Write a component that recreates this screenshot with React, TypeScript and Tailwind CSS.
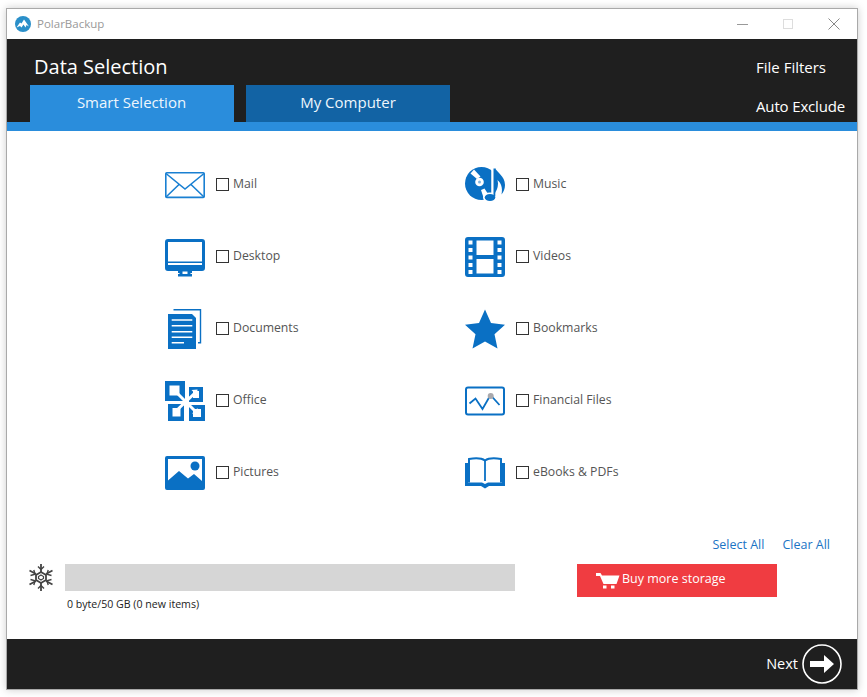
import React from "react";

const C = "#0a70c4";

const Mail = () => (
  <svg width="40" height="40" viewBox="0 0 40 40" fill="none" stroke="#1a80d2" strokeWidth="1.600">
    <rect x="0.800" y="7.800" width="38.400" height="24.600" rx="1" />
    <path d="M1 8.500 L20 24 L39 8.500 M1 32 L14 19.500 M39 32 L26 19.500" />
  </svg>
);
const Desktop = () => (
  <svg width="40" height="40" viewBox="0 0 40 40" fill={C}>
    <path fillRule="evenodd" d="M3 2h34a3 3 0 0 1 3 3v26a3 3 0 0 1-3 3H3a3 3 0 0 1-3-3V5a3 3 0 0 1 3-3zM3 5v19.500h34V5zM3 26v2h34v-2z" />
    <path fillRule="evenodd" d="M13 34h14v2h-1.500v1H27v2.500H13V37h1.500v-1H13zM17.500 34.500h5V37h-5z" />
  </svg>
);
const Documents = () => (
  <svg width="40" height="40" viewBox="0 0 40 40" fill="none">
    <path d="M8.500 .7h27v33h-2.500" stroke={C} strokeWidth="1.400" />
    <path d="M3 5h24l4 4v31H3z" fill={C} />
    <path d="M6.700 11h20.600M6.700 16.700h20.600M6.700 22.700h20.600M6.700 28.300h20.600M6.700 33.700h12.300" stroke="#fff" strokeWidth="1.400" />
  </svg>
);
const Office = () => (
  <svg width="40" height="40" viewBox="0 0 40 40">
    <path fill={C} fillRule="evenodd" d="M0 0h20v20H0zM4.500 4.500v10h10v-10z" />
    <path fill={C} fillRule="evenodd" d="M24 6h14v15H24zM28 10v7h6v-7z" />
    <path fill={C} fillRule="evenodd" d="M3 23h16v17H3zM7.500 27v8.500h8V27z" />
    <path fill={C} fillRule="evenodd" d="M24 24h16v16H24zM28 28v8h8v-8z" />
    <path d="M10 10l21 21M31 11L11 30" stroke="#fff" strokeWidth="3" fill="none" />
    <path d="M19 19h5v5h-5z" fill="#fff" />
    <path d="M32.500 8.500l-.5 6-5.500-5.500zM33 33l-6-.5 5.500-5.500z" fill="#fff" />
  </svg>
);
const Pictures = () => (
  <svg width="40" height="40" viewBox="0 0 40 40" fill={C}>
    <path fillRule="evenodd" d="M2 3h36a2 2 0 0 1 2 2v30a2 2 0 0 1-2 2H2a2 2 0 0 1-2-2V5a2 2 0 0 1 2-2zM3 6v21.500L14 18l9 7.500 6-4.500 8 7V6z" />
    <circle cx="30" cy="13" r="4.500" />
  </svg>
);
const Music = () => (
  <svg width="40" height="40" viewBox="0 0 40 40" fill={C}>
    <circle cx="16.500" cy="18.500" r="16.500" />
    <path d="M9 4.500l6.500 7-3.500 2.500-6.500-5.500zM16 25l3.500-1.500 4.500 7-5 3.500z" fill="#fff" />
    <circle cx="14.500" cy="17" r="4.300" fill="#fff" />
    <circle cx="14.500" cy="17" r="1.500" fill={C} opacity="0.5" />
    <path d="M28 1v29" stroke="#fff" strokeWidth="3.500" fill="none" />
    <ellipse cx="25" cy="32.500" rx="7" ry="5" fill="#fff" />
    <ellipse cx="25" cy="32.500" rx="5.300" ry="3.500" fill={C} />
    <path d="M28.500 3.500h1.800v28h-1.800z" />
    <path d="M30 3c1.500 4 10 8 10 17 0 4-1.500 7-3.500 9.500 1.500-7-.5-13-6.500-16z" />
  </svg>
);
const Videos = () => (
  <svg width="40" height="40" viewBox="0 0 40 40" fill={C}>
    <path fillRule="evenodd" d="M3 0h34a3 3 0 0 1 3 3v34a3 3 0 0 1-3 3H3a3 3 0 0 1-3-3V3a3 3 0 0 1 3-3zM3.500 3.500v4h4v-4zM3.500 11v4h4v-4zM3.500 18.500v4h4v-4zM3.500 26v4h4v-4zM3.500 33v4h4v-4zM32.500 3.500v4h4v-4zM32.500 11v4h4v-4zM32.500 18.500v4h4v-4zM32.500 26v4h4v-4zM32.500 33v4h4v-4zM11.500 3.500V18h17V3.500zM11.500 22v14.500h17V22z" />
  </svg>
);
const Star = () => (
  <svg width="40" height="40" viewBox="0 0 40 40" fill={C}>
    <path d="M20 0.500l6 13.500 14 1.800-10.500 9.500 3 14.200L20 32.500 7.500 39.500l3-14.200L0 15.800 14 14z" />
  </svg>
);
const Financial = () => (
  <svg width="40" height="40" viewBox="0 0 40 40" fill="none">
    <rect x="1" y="6.500" width="38" height="27" rx="2" stroke={C} strokeWidth="2" />
    <path d="M4.500 22.500l6-5 7 10.500 8-14 9 10" stroke={C} strokeWidth="1.800" />
    <circle cx="25.700" cy="15" r="3" fill="#a9a9ad" />
  </svg>
);
const Book = () => (
  <svg width="40" height="40" viewBox="0 0 40 40" fill="none">
    <path d="M4 29.500V6c5.500-1 12.500-1 16 1.500C23.500 5 30.500 5 36 6v23.500" stroke={C} strokeWidth="2" />
    <path d="M20 8v20" stroke={C} strokeWidth="1.800" />
    <path d="M0 10h3v19.500h14l3 1.500 3-1.500h14V10h3v23H24l-4 2.500-4-2.500H0z" fill={C} />
  </svg>
);
const Flake = () => (
  <svg width="26" height="27" viewBox="0 0 26 27" fill="none" stroke="#444" strokeWidth="1.400">
    <path d="M13 0v8M13 19v8M1.500 6.500 8 10M18 17l6.500 3.500M24.500 6.500 18 10M8 17l-6.500 3.500" strokeWidth="1.800" />
    <path d="M10 2.500l3 3 3-3M10 24.500l3-3 3 3M2.500 11.500l4.500-1.200-1.200-4.300M23.500 11.500 19 10.300l1.200-4.300M2.500 15.500l4.500 1.200-1.200 4.300M23.500 15.500 19 16.700l1.200 4.300" />
    <path d="M13 8l5 3v5l-5 3-5-3v-5z" strokeWidth="1.800" />
    <path d="M13 11l2.500 1.500v2L13 16l-2.500-1.500v-2z" strokeWidth="1.200" />
  </svg>
);
const Cart = () => (
  <svg width="24" height="16" viewBox="0 0 24 16" fill="#fff">
    <path d="M0 0h4.500l1.500 2.500h17.500L20.500 11H7.500L4 3H0z" />
    <rect x="7" y="12.500" width="3.500" height="3" />
    <rect x="15" y="12.500" width="3.500" height="3" />
  </svg>
);
const Logo = () => (
  <svg width="16" height="16" viewBox="0 0 16 16">
    <circle cx="8" cy="8" r="8" fill="#2a8fc9" />
    <path d="M1.500 11.500 5 6.500l1.500 1L9 3.500 14 10.500l-2.500-1.500-1 2.500-2-3-2 3-1.500-1.500z" fill="#fff" />
  </svg>
);

const items: [React.FC, string, React.FC, string][] = [
  [Mail, "Mail", Music, "Music"],
  [Desktop, "Desktop", Videos, "Videos"],
  [Documents, "Documents", Star, "Bookmarks"],
  [Office, "Office", Financial, "Financial Files"],
  [Pictures, "Pictures", Book, "eBooks & PDFs"],
];

const Item = ({ Icon, label }: { Icon: React.FC; label: string }) => (
  <div className="flex items-center h-10 w-[300px]">
    <Icon />
    <span className="ml-[11px] mt-[-2px] w-[13px] h-[13px] border border-[#333] bg-white shrink-0" />
    <span className="ml-1 mt-[-1px] text-[12.250px] leading-none text-[#555]">{label}</span>
  </div>
);

export default function App() {
  return (
    <div className="w-[867px] h-[697px] bg-white pt-2 pl-[6px] overflow-hidden font-['Open_Sans','Noto_Sans',sans-serif]">
      <div className="w-[852px] h-[682px] border border-[#a9a9a9] shadow-[0_0_8px_rgba(0,0,0,0.2)] flex flex-col bg-white">
        <div className="h-[30px] flex items-center shrink-0 pl-2">
          <Logo />
          <span className="ml-[6px] text-[11.500px] text-[#999]">PolarBackup</span>
          <div className="ml-auto flex items-center">
            <span className="w-[11px] h-px bg-[#999] mr-[35px]" />
            <span className="w-[10px] h-[10px] border border-[#ddd] mr-[35px]" />
            <svg className="mr-[17px]" width="12" height="12" viewBox="0 0 12 12" stroke="#888" fill="none"><path d="M.5.500l11 11M11.500.500l-11 11" /></svg>
          </div>
        </div>

        <div className="h-[83px] bg-[#1f1f1f] shrink-0 flex justify-between text-white">
          <div className="flex flex-col pl-[23px]">
            <div className="pl-[4px] h-[46px] pt-[14px] text-[20px] leading-[28px]">Data Selection</div>
            <div className="flex gap-3 h-[37px]">
              <div className="w-[204px] bg-[#2a8ddc] flex items-center justify-center pb-[2px] pr-px text-[15px] text-[#eef6fc]">Smart Selection</div>
              <div className="w-[204px] bg-[#1263a4] flex items-center justify-center pb-[2px] text-[15px] text-[#eef6fc]">My Computer</div>
            </div>
          </div>
          <div className="flex flex-col w-[101px] pt-[18px] text-[15px] leading-5 gap-[19px]">
            <span>File Filters</span>
            <span className="tracking-[-0.15px]">Auto Exclude</span>
          </div>
        </div>
        <div className="h-[9px] bg-[#2a8ddc] shrink-0" />

        <div className="flex-1 flex flex-col">
          <div className="pt-[34px] pl-[158px] flex flex-col gap-8">
            {items.map(([A, a, B, b]) => (
              <div key={a} className="flex">
                <Item Icon={A} label={a} />
                <Item Icon={B} label={b} />
              </div>
            ))}
          </div>
          <div className="mt-[42px] flex justify-end gap-[18px] pr-[27px] text-[12.500px] leading-5 text-[#1b74c5]">
            <span>Select All</span>
            <span>Clear All</span>
          </div>
          <div className="mt-[9px] flex pl-[21px] items-start">
            <Flake />
            <div className="ml-[11px] w-[450px]">
              <div className="h-[27px] bg-[#d6d6d6]" />
              <div className="pl-[2px] pt-[5px] text-[10.600px] leading-4 text-[#222]">0 byte/50 GB (0 new items)</div>
            </div>
            <div className="ml-[62px] w-[200px] h-[33px] bg-[#f03c41] flex items-center pl-[19px] text-white text-[12.500px]">
              <Cart />
              <span className="ml-[2px] mt-[-2px]">Buy more storage</span>
            </div>
          </div>
        </div>

        <div className="h-[50px] bg-[#1f1f1f] shrink-0 flex items-center justify-end pr-[14px]">
          <span className="text-white text-[14.500px] mr-[3px] mt-[-1px]">Next</span>
          <svg width="42" height="42" viewBox="0 0 42 42" fill="none">
            <circle cx="21" cy="21" r="19" stroke="#fff" strokeWidth="1.600" />
            <path d="M9 18h14v-6l10 9-10 9v-6H9z" fill="#fff" />
          </svg>
        </div>
      </div>
    </div>
  );
}
